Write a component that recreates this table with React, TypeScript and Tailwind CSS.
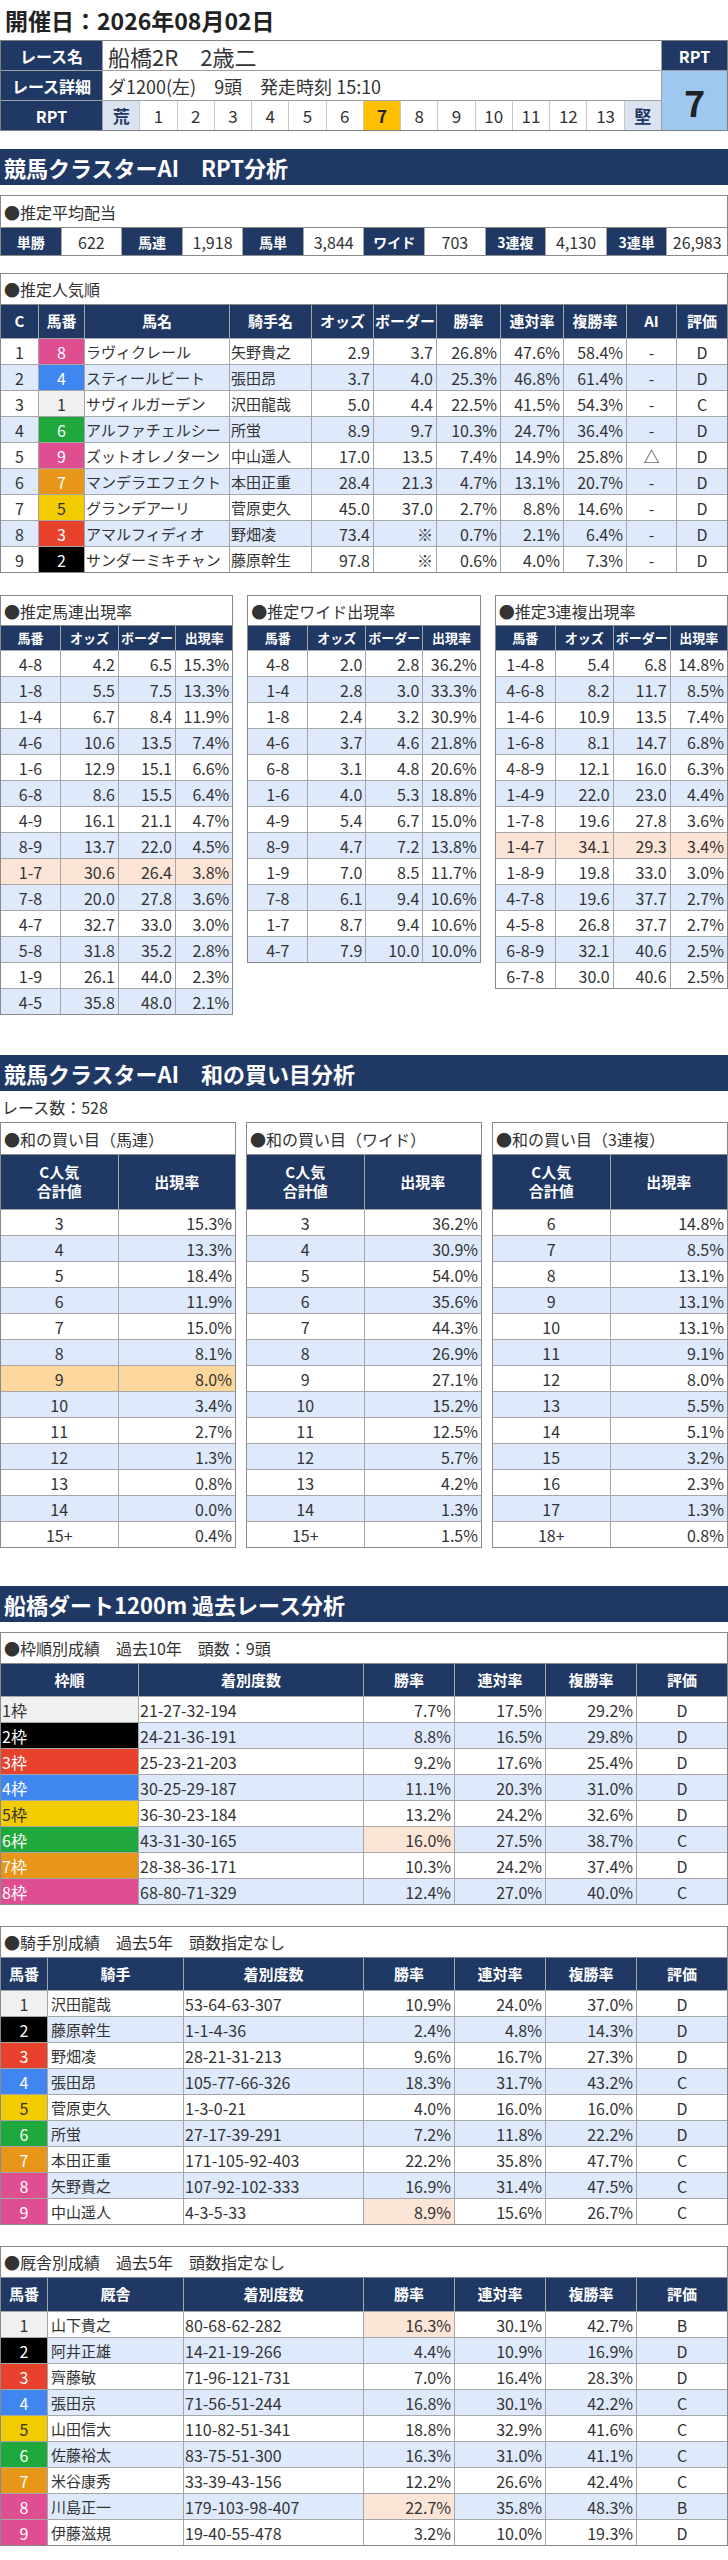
import React from 'react';

type Align = 'l' | 'c' | 'r';
const AL: Record<Align, string> = {
  l: 'justify-start pl-[3px]',
  c: 'justify-center',
  r: 'justify-end pr-[3px]',
};
const WHITE = 'bg-white';
const BLUE = 'bg-[#deeafc]';
const SALMON = 'bg-[#fce4d6]';
const ORANGE = 'bg-[#fdd89c]';
const NAVY = 'bg-[#203864]';

const FRAME: Record<number, string> = {
  1: 'bg-[#f0f0f0] text-[#333]',
  2: 'bg-black text-white',
  3: 'bg-[#e8412c] text-white',
  4: 'bg-[#3f86f0] text-white',
  5: 'bg-[#f2cc00] text-[#333]',
  6: 'bg-[#1fa83b] text-white',
  7: 'bg-[#e8961a] text-white',
  8: 'bg-[#e04e92] text-white',
  9: 'bg-[#e04e92] text-white',
};

function rowBg(i: number) {
  return i % 2 === 0 ? WHITE : BLUE;
}

function Cell({
  children,
  align = 'c',
  cls = '',
  h = 'h-[25px]',
  size = 'text-[16px]',
}: {
  children?: React.ReactNode;
  align?: Align;
  cls?: string;
  h?: string;
  size?: string;
}) {
  return (
    <div className={`flex items-center whitespace-nowrap overflow-hidden leading-none ${size} ${h} ${AL[align]} ${cls}`}>
      {children}
    </div>
  );
}

function Head({ children, h = 'h-[33px]', size = 'text-[15px]' }: { children: React.ReactNode; h?: string; size?: string }) {
  return (
    <div className={`flex items-center justify-center text-center whitespace-nowrap ${NAVY} text-white font-bold leading-[1.25] ${size} ${h}`}>
      {children}
    </div>
  );
}

function Box({ title, children, titleH = 'h-[31px]' }: { title: string; children: React.ReactNode; titleH?: string }) {
  return (
    <div className="border border-[#8a8a8a] bg-white">
      <div className={`flex items-center pl-[3px] text-[16px] leading-none text-[#333] border-b border-[#8a8a8a] ${titleH}`}>{title}</div>
      {children}
    </div>
  );
}

function SectionBar({ children, cls }: { children: React.ReactNode; cls: string }) {
  return (
    <div className={`h-[36px] ${NAVY} text-white text-[22px] font-bold flex items-center pl-[4px] leading-none ${cls}`}>{children}</div>
  );
}

const popular: [number, number, string, string, string, string, string, string, string, string, string][] = [
  [1, 8, 'ラヴィクレール', '矢野貴之', '2.9', '3.7', '26.8%', '47.6%', '58.4%', '-', 'D'],
  [2, 4, 'スティールビート', '張田昂', '3.7', '4.0', '25.3%', '46.8%', '61.4%', '-', 'D'],
  [3, 1, 'サヴィルガーデン', '沢田龍哉', '5.0', '4.4', '22.5%', '41.5%', '54.3%', '-', 'C'],
  [4, 6, 'アルファチェルシー', '所蛍', '8.9', '9.7', '10.3%', '24.7%', '36.4%', '-', 'D'],
  [5, 9, 'ズットオレノターン', '中山遥人', '17.0', '13.5', '7.4%', '14.9%', '25.8%', '△', 'D'],
  [6, 7, 'マンデラエフェクト', '本田正重', '28.4', '21.3', '4.7%', '13.1%', '20.7%', '-', 'D'],
  [7, 5, 'グランデアーリ', '菅原吏久', '45.0', '37.0', '2.7%', '8.8%', '14.6%', '-', 'D'],
  [8, 3, 'アマルフィディオ', '野畑凌', '73.4', '※', '0.7%', '2.1%', '6.4%', '-', 'D'],
  [9, 2, 'サンダーミキチャン', '藤原幹生', '97.8', '※', '0.6%', '4.0%', '7.3%', '-', 'D'],
];

type OddsRow = [string, string, string, string, boolean?];
const umaren: OddsRow[] = [
  ['4-8', '4.2', '6.5', '15.3%'],
  ['1-8', '5.5', '7.5', '13.3%'],
  ['1-4', '6.7', '8.4', '11.9%'],
  ['4-6', '10.6', '13.5', '7.4%'],
  ['1-6', '12.9', '15.1', '6.6%'],
  ['6-8', '8.6', '15.5', '6.4%'],
  ['4-9', '16.1', '21.1', '4.7%'],
  ['8-9', '13.7', '22.0', '4.5%'],
  ['1-7', '30.6', '26.4', '3.8%', true],
  ['7-8', '20.0', '27.8', '3.6%'],
  ['4-7', '32.7', '33.0', '3.0%'],
  ['5-8', '31.8', '35.2', '2.8%'],
  ['1-9', '26.1', '44.0', '2.3%'],
  ['4-5', '35.8', '48.0', '2.1%'],
];
const wide: OddsRow[] = [
  ['4-8', '2.0', '2.8', '36.2%'],
  ['1-4', '2.8', '3.0', '33.3%'],
  ['1-8', '2.4', '3.2', '30.9%'],
  ['4-6', '3.7', '4.6', '21.8%'],
  ['6-8', '3.1', '4.8', '20.6%'],
  ['1-6', '4.0', '5.3', '18.8%'],
  ['4-9', '5.4', '6.7', '15.0%'],
  ['8-9', '4.7', '7.2', '13.8%'],
  ['1-9', '7.0', '8.5', '11.7%'],
  ['7-8', '6.1', '9.4', '10.6%'],
  ['1-7', '8.7', '9.4', '10.6%'],
  ['4-7', '7.9', '10.0', '10.0%'],
];
const trio: OddsRow[] = [
  ['1-4-8', '5.4', '6.8', '14.8%'],
  ['4-6-8', '8.2', '11.7', '8.5%'],
  ['1-4-6', '10.9', '13.5', '7.4%'],
  ['1-6-8', '8.1', '14.7', '6.8%'],
  ['4-8-9', '12.1', '16.0', '6.3%'],
  ['1-4-9', '22.0', '23.0', '4.4%'],
  ['1-7-8', '19.6', '27.8', '3.6%'],
  ['1-4-7', '34.1', '29.3', '3.4%', true],
  ['1-8-9', '19.8', '33.0', '3.0%'],
  ['4-7-8', '19.6', '37.7', '2.7%'],
  ['4-5-8', '26.8', '37.7', '2.7%'],
  ['6-8-9', '32.1', '40.6', '2.5%'],
  ['6-7-8', '30.0', '40.6', '2.5%'],
];

type SumRow = [string, string, boolean?];
const sumUmaren: SumRow[] = [
  ['3', '15.3%'], ['4', '13.3%'], ['5', '18.4%'], ['6', '11.9%'], ['7', '15.0%'], ['8', '8.1%'],
  ['9', '8.0%', true], ['10', '3.4%'], ['11', '2.7%'], ['12', '1.3%'], ['13', '0.8%'], ['14', '0.0%'], ['15+', '0.4%'],
];
const sumWide: SumRow[] = [
  ['3', '36.2%'], ['4', '30.9%'], ['5', '54.0%'], ['6', '35.6%'], ['7', '44.3%'], ['8', '26.9%'],
  ['9', '27.1%'], ['10', '15.2%'], ['11', '12.5%'], ['12', '5.7%'], ['13', '4.2%'], ['14', '1.3%'], ['15+', '1.5%'],
];
const sumTrio: SumRow[] = [
  ['6', '14.8%'], ['7', '8.5%'], ['8', '13.1%'], ['9', '13.1%'], ['10', '13.1%'], ['11', '9.1%'],
  ['12', '8.0%'], ['13', '5.5%'], ['14', '5.1%'], ['15', '3.2%'], ['16', '2.3%'], ['17', '1.3%'], ['18+', '0.8%'],
];

const waku: [string, string, string, string, string, boolean?][] = [
  ['21-27-32-194', '7.7%', '17.5%', '29.2%', 'D'],
  ['24-21-36-191', '8.8%', '16.5%', '29.8%', 'D'],
  ['25-23-21-203', '9.2%', '17.6%', '25.4%', 'D'],
  ['30-25-29-187', '11.1%', '20.3%', '31.0%', 'D'],
  ['36-30-23-184', '13.2%', '24.2%', '32.6%', 'D'],
  ['43-31-30-165', '16.0%', '27.5%', '38.7%', 'C', true],
  ['28-38-36-171', '10.3%', '24.2%', '37.4%', 'D'],
  ['68-80-71-329', '12.4%', '27.0%', '40.0%', 'C'],
];
const jockeys: [string, string, string, string, string, string, boolean?][] = [
  ['沢田龍哉', '53-64-63-307', '10.9%', '24.0%', '37.0%', 'D'],
  ['藤原幹生', '1-1-4-36', '2.4%', '4.8%', '14.3%', 'D'],
  ['野畑凌', '28-21-31-213', '9.6%', '16.7%', '27.3%', 'D'],
  ['張田昂', '105-77-66-326', '18.3%', '31.7%', '43.2%', 'C'],
  ['菅原吏久', '1-3-0-21', '4.0%', '16.0%', '16.0%', 'D'],
  ['所蛍', '27-17-39-291', '7.2%', '11.8%', '22.2%', 'D'],
  ['本田正重', '171-105-92-403', '22.2%', '35.8%', '47.7%', 'C'],
  ['矢野貴之', '107-92-102-333', '16.9%', '31.4%', '47.5%', 'C'],
  ['中山遥人', '4-3-5-33', '8.9%', '15.6%', '26.7%', 'C', true],
];
const trainers: [string, string, string, string, string, string, boolean?][] = [
  ['山下貴之', '80-68-62-282', '16.3%', '30.1%', '42.7%', 'B', true],
  ['阿井正雄', '14-21-19-266', '4.4%', '10.9%', '16.9%', 'D'],
  ['齊藤敏', '71-96-121-731', '7.0%', '16.4%', '28.3%', 'D'],
  ['張田京', '71-56-51-244', '16.8%', '30.1%', '42.2%', 'C'],
  ['山田信大', '110-82-51-341', '18.8%', '32.9%', '41.6%', 'C'],
  ['佐藤裕太', '83-75-51-300', '16.3%', '31.0%', '41.1%', 'C'],
  ['米谷康秀', '33-39-43-156', '12.2%', '26.6%', '42.4%', 'C'],
  ['川島正一', '179-103-98-407', '22.7%', '35.8%', '48.3%', 'B', true],
  ['伊藤滋規', '19-40-55-478', '3.2%', '10.0%', '19.3%', 'D'],
];

function OddsTable({ title, rows }: { title: string; rows: OddsRow[] }) {
  return (
    <Box title={title} titleH="h-[30px]">
      <div className="grid grid-cols-[59px_57px_56px_1fr] gap-px bg-[#a6a6a6]">
        <Head h="h-[24px]" size="text-[13px]">馬番</Head>
        <Head h="h-[24px]" size="text-[13px]">オッズ</Head>
        <Head h="h-[24px]" size="text-[13px]">ボーダー</Head>
        <Head h="h-[24px]" size="text-[13px]">出現率</Head>
        {rows.map((r, i) => {
          const bg = r[4] ? SALMON : rowBg(i);
          return (
            <React.Fragment key={i}>
              <Cell align="c" cls={bg}>{r[0]}</Cell>
              <Cell align="r" cls={bg}>{r[1]}</Cell>
              <Cell align="r" cls={bg}>{r[2]}</Cell>
              <Cell align="r" cls={bg}>{r[3]}</Cell>
            </React.Fragment>
          );
        })}
      </div>
    </Box>
  );
}

function SumTable({ title, rows }: { title: string; rows: SumRow[] }) {
  return (
    <Box title={title} titleH="h-[32px]">
      <div className="grid grid-cols-2 gap-px bg-[#a6a6a6]">
        <Head h="h-[54px]">
          <span>C人気<br />合計値</span>
        </Head>
        <Head h="h-[54px]">出現率</Head>
        {rows.map((r, i) => {
          const bg = r[2] ? ORANGE : rowBg(i);
          return (
            <React.Fragment key={i}>
              <Cell align="c" cls={bg}>{r[0]}</Cell>
              <Cell align="r" cls={bg}>{r[1]}</Cell>
            </React.Fragment>
          );
        })}
      </div>
    </Box>
  );
}

function PersonTable({ title, label, rows, headH }: { title: string; label: string; rows: [string, string, string, string, string, string, boolean?][]; headH: string }) {
  return (
    <Box title={title}>
      <div className="grid grid-cols-[46px_135px_179px_90px_90px_90px_1fr] gap-px bg-[#a6a6a6]">
        <Head h={headH}>馬番</Head>
        <Head h={headH}>{label}</Head>
        <Head h={headH}>着別度数</Head>
        <Head h={headH}>勝率</Head>
        <Head h={headH}>連対率</Head>
        <Head h={headH}>複勝率</Head>
        <Head h={headH}>評価</Head>
        {rows.map((r, i) => {
          const bg = rowBg(i);
          return (
            <React.Fragment key={i}>
              <Cell align="c" cls={FRAME[i + 1]}>{i + 1}</Cell>
              <Cell align="l" cls={bg} size="text-[15px]">{r[0]}</Cell>
              <Cell align="l" cls={`${bg} !pl-[1px]`}>{r[1]}</Cell>
              <Cell align="r" cls={r[6] ? SALMON : bg}>{r[2]}</Cell>
              <Cell align="r" cls={bg}>{r[3]}</Cell>
              <Cell align="r" cls={bg}>{r[4]}</Cell>
              <Cell align="c" cls={bg}>{r[5]}</Cell>
            </React.Fragment>
          );
        })}
      </div>
    </Box>
  );
}

export default function App() {
  const rptCells = ['荒', '1', '2', '3', '4', '5', '6', '7', '8', '9', '10', '11', '12', '13', '堅'];
  const payouts: [string, string][] = [
    ['単勝', '622'],
    ['馬連', '1,918'],
    ['馬単', '3,844'],
    ['ワイド', '703'],
    ['3連複', '4,130'],
    ['3連単', '26,983'],
  ];
  return (
    <div className="w-[728px] bg-white text-[#333] font-['Noto_Sans_CJK_JP',sans-serif] pb-[6px]">
      <div className="h-[40px] flex items-center pl-[5px] text-[23px] font-bold leading-none text-[#222]">
        開催日：2026年08月02日
      </div>

      <div className="grid grid-cols-[101px_1fr_65px] grid-rows-[29px_29px_29px] gap-px bg-[#a0a0a0] border border-[#7f7f7f]">
        <div className={`${NAVY} text-white font-bold text-[16px] flex items-center justify-center leading-none`}>レース名</div>
        <div className="bg-white text-[22px] flex items-center pl-[5px] leading-none">船橋2R　2歳二</div>
        <div className={`${NAVY} text-white font-bold text-[16px] flex items-center justify-center leading-none`}>RPT</div>
        <div className={`${NAVY} text-white font-bold text-[16px] flex items-center justify-center leading-none`}>レース詳細</div>
        <div className="bg-white text-[18px] flex items-center pl-[5px] leading-none">ダ1200(左)　9頭　発走時刻 15:10</div>
        <div className="row-span-2 bg-[#9ec8ef] text-[#222] text-[36px] font-bold flex items-center justify-center leading-none">7</div>
        <div className={`${NAVY} text-white font-bold text-[16px] flex items-center justify-center leading-none`}>RPT</div>
        <div className="grid grid-cols-15 gap-px bg-[#c8c8c8]">
          {rptCells.map((c, i) => {
            const edge = i === 0 || i === rptCells.length - 1;
            const cls = edge
              ? 'bg-[#dbe2f0] text-[#203864] font-bold'
              : c === '7'
              ? 'bg-[#ffc000] text-[#222] font-bold'
              : 'bg-white text-[#333]';
            return (
              <div key={i} className={`flex items-center justify-center text-[17px] leading-none ${cls}`}>
                {c}
              </div>
            );
          })}
        </div>
      </div>

      <SectionBar cls="mt-[18px]">競馬クラスターAI　RPT分析</SectionBar>

      <div className="mt-[10px]">
        <Box title="●推定平均配当" titleH="h-[32px]">
          <div className="grid grid-cols-12 gap-px bg-[#a6a6a6]">
            {payouts.map(([k, v]) => (
              <React.Fragment key={k}>
                <div className={`h-[27px] ${NAVY} text-white font-bold text-[14px] flex items-center justify-center leading-none`}>{k}</div>
                <div className="h-[27px] bg-white text-[16px] flex items-center justify-center leading-none">{v}</div>
              </React.Fragment>
            ))}
          </div>
        </Box>
      </div>

      <div className="mt-[17px]">
        <Box title="●推定人気順">
          <div className="grid grid-cols-[37px_45px_144px_81px_61px_62px_63px_62px_62px_49px_1fr] gap-px bg-[#a6a6a6]">
            {['C', '馬番', '馬名', '騎手名', 'オッズ', 'ボーダー', '勝率', '連対率', '複勝率', 'AI', '評価'].map((h) => (
              <Head key={h}>{h}</Head>
            ))}
            {popular.map((r, i) => {
              const bg = rowBg(i);
              return (
                <React.Fragment key={i}>
                  <Cell align="c" cls={bg}>{r[0]}</Cell>
                  <Cell align="c" cls={FRAME[r[1]]}>{r[1]}</Cell>
                  <Cell align="l" cls={`${bg} !pl-[1px]`} size="text-[15px]">{r[2]}</Cell>
                  <Cell align="l" cls={`${bg} !pl-[1px]`} size="text-[15px]">{r[3]}</Cell>
                  <Cell align="r" cls={bg}>{r[4]}</Cell>
                  <Cell align="r" cls={bg}>{r[5]}</Cell>
                  <Cell align="r" cls={bg}>{r[6]}</Cell>
                  <Cell align="r" cls={bg}>{r[7]}</Cell>
                  <Cell align="r" cls={bg}>{r[8]}</Cell>
                  <Cell align="c" cls={bg}>{r[9]}</Cell>
                  <Cell align="c" cls={bg}>{r[10]}</Cell>
                </React.Fragment>
              );
            })}
          </div>
        </Box>
      </div>

      <div className="mt-[22px] grid grid-cols-3 gap-[14px] items-start">
        <OddsTable title="●推定馬連出現率" rows={umaren} />
        <OddsTable title="●推定ワイド出現率" rows={wide} />
        <OddsTable title="●推定3連複出現率" rows={trio} />
      </div>

      <SectionBar cls="mt-[40px]">競馬クラスターAI　和の買い目分析</SectionBar>
      <div className="h-[31px] flex items-center text-[16px] leading-none pl-[2px]">レース数：528</div>

      <div className="grid grid-cols-3 gap-[10px] items-start">
        <SumTable title="●和の買い目（馬連）" rows={sumUmaren} />
        <SumTable title="●和の買い目（ワイド）" rows={sumWide} />
        <SumTable title="●和の買い目（3連複）" rows={sumTrio} />
      </div>

      <SectionBar cls="mt-[38px]">船橋ダート1200m 過去レース分析</SectionBar>

      <div className="mt-[10px]">
        <Box title="●枠順別成績　過去10年　頭数：9頭">
          <div className="grid grid-cols-[137px_224px_90px_90px_90px_1fr] gap-px bg-[#a6a6a6]">
            {['枠順', '着別度数', '勝率', '連対率', '複勝率', '評価'].map((h) => (
              <Head key={h} h="h-[32px]">{h}</Head>
            ))}
            {waku.map((r, i) => {
              const bg = rowBg(i);
              return (
                <React.Fragment key={i}>
                  <Cell align="l" cls={`${FRAME[i + 1]} !pl-[1px]`}>{i + 1}枠</Cell>
                  <Cell align="l" cls={`${bg} !pl-[1px]`}>{r[0]}</Cell>
                  <Cell align="r" cls={r[5] ? SALMON : bg}>{r[1]}</Cell>
                  <Cell align="r" cls={bg}>{r[2]}</Cell>
                  <Cell align="r" cls={bg}>{r[3]}</Cell>
                  <Cell align="c" cls={bg}>{r[4]}</Cell>
                </React.Fragment>
              );
            })}
          </div>
        </Box>
      </div>

      <div className="mt-[21px]">
        <PersonTable title="●騎手別成績　過去5年　頭数指定なし" label="騎手" rows={jockeys} headH="h-[32px]" />
      </div>

      <div className="mt-[21px]">
        <PersonTable title="●厩舎別成績　過去5年　頭数指定なし" label="厩舎" rows={trainers} headH="h-[33px]" />
      </div>
    </div>
  );
}
